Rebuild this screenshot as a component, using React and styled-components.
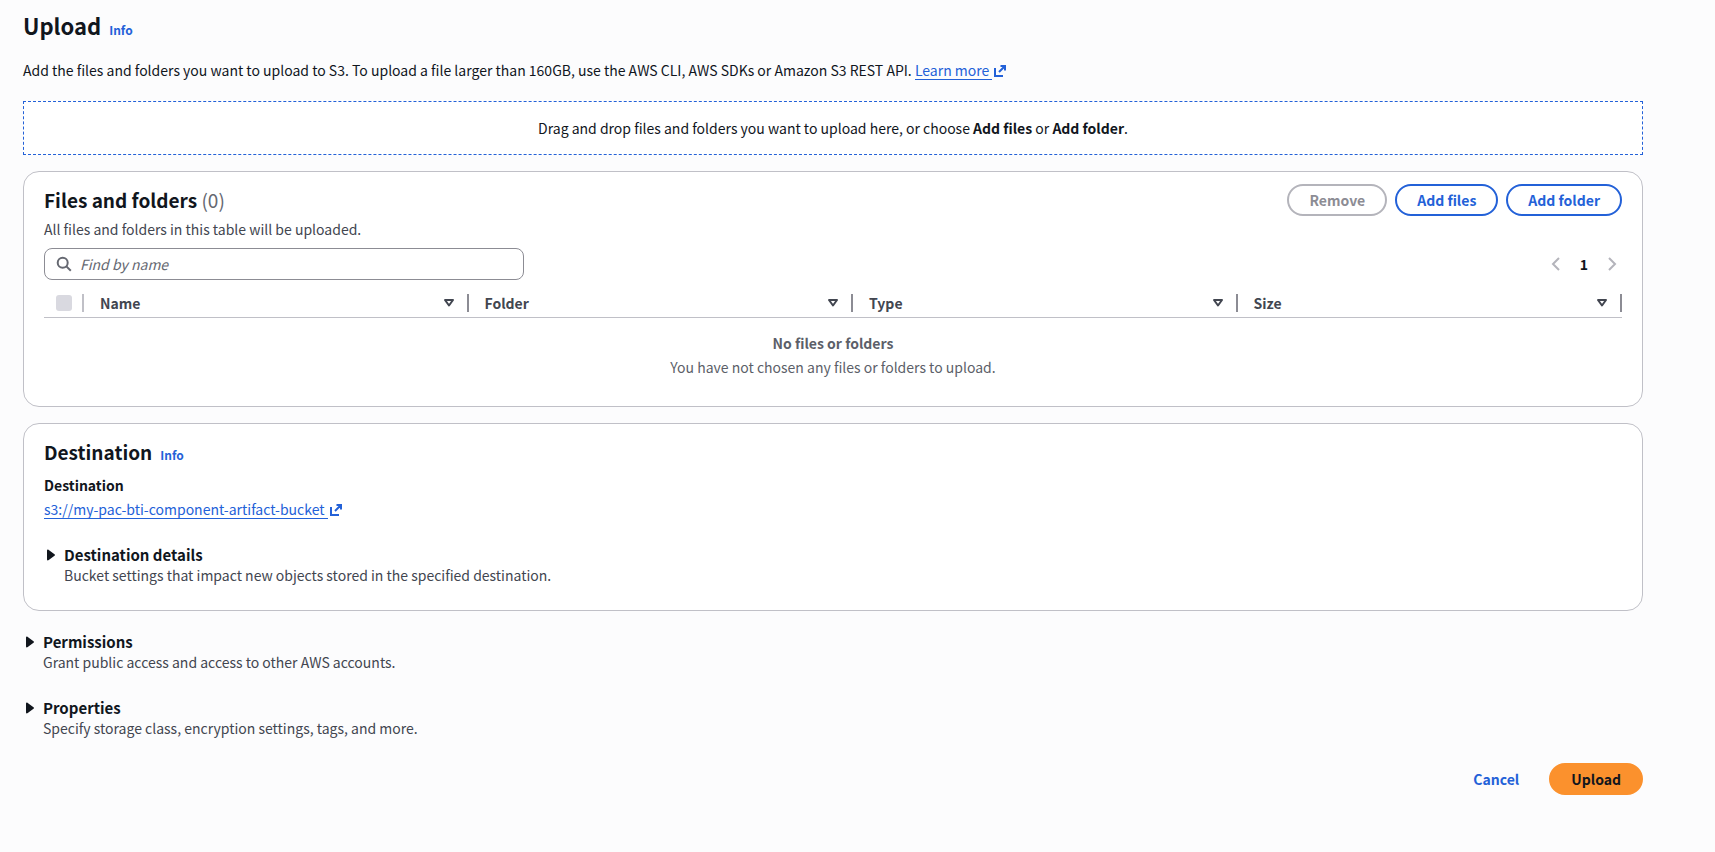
import styled, { createGlobalStyle } from 'styled-components';

const GlobalStyle = createGlobalStyle`
  * {
    box-sizing: border-box;
  }
  body {
    margin: 0;
    background: #fcfcfd;
    color: #11161d;
    font-family: 'Noto Sans CJK SC', 'Noto Sans', sans-serif;
    font-size: 14px;
    line-height: 20px;
  }
  button, input {
    font-family: inherit;
    font-size: inherit;
  }
`;

const Page = styled.main`
  padding: 10px 72px 24px 23px;
`;

const TitleRow = styled.div`
  display: flex;
  align-items: baseline;
  gap: 8px;
`;

const PageTitle = styled.h1`
  margin: 0;
  font-size: 22px;
  line-height: 30px;
`;

const InfoLink = styled.a`
  color: #2361d8;
  font-size: 12px;
  font-weight: 700;
  line-height: 16px;
  text-decoration: none;
`;

const Intro = styled.p`
  margin: 20px 0 21px;
`;

const ExternalLink = styled.a`
  display: inline-flex;
  align-items: center;
  gap: 1px;
  color: #2361d8;
  text-decoration: none;
`;

const LinkText = styled.span`
  padding-right: 3px;
  line-height: 18px;
  border-bottom: 1px solid #2361d8;
`;

const Stack = styled.div`
  display: flex;
  flex-direction: column;
  gap: 16px;
`;

const DropZone = styled.div`
  padding: 16px;
  border: 1px dashed #2361d8;
  background: #fff;
  text-align: center;
`;

const Card = styled.section`
  padding: 12px 20px ${props => props.$bottom || 0}px;
  border: 1px solid #c0c0c7;
  border-radius: 16px;
  background: #fff;
`;

const CardHeader = styled.div`
  display: flex;
  align-items: center;
  justify-content: space-between;
  min-height: 32px;
`;

const CardTitle = styled.h2`
  margin: 0;
  font-size: 19px;
  line-height: 24px;
`;

const Counter = styled.span`
  color: #656871;
  font-weight: 400;
`;

const Description = styled.p`
  margin: ${props => props.$top || 0}px 0 0;
  color: #424650;
`;

const Actions = styled.div`
  display: flex;
  justify-content: flex-end;
  gap: 8px;
`;

const Button = styled.button`
  height: 32px;
  padding: 0 20px;
  border: 2px solid #2361d8;
  border-radius: 16px;
  background: #fff;
  color: #2361d8;
  font-weight: 700;
  line-height: 20px;
  cursor: pointer;
  &:disabled {
    border-color: #b4b4bb;
    color: #8c8c94;
    cursor: default;
  }
`;

const LinkButton = styled(Button)`
  border-color: transparent;
  background: transparent;
`;

const PrimaryButton = styled(Button)`
  border-color: #fb912d;
  background: #fb912d;
  color: #11161d;
`;

const Tools = styled.div`
  display: flex;
  align-items: center;
  justify-content: space-between;
  margin-top: 9px;
`;

const SearchBox = styled.label`
  display: flex;
  align-items: center;
  gap: 8px;
  width: 480px;
  height: 32px;
  padding: 0 11px;
  border: 1px solid #8c8c94;
  border-radius: 8px;
`;

const SearchInput = styled.input`
  flex: 1;
  min-width: 0;
  padding: 0;
  border: none;
  outline: none;
  background: transparent;
  &::placeholder {
    color: #656871;
    font-style: italic;
    opacity: 1;
  }
`;

const Pagination = styled.nav`
  display: flex;
  align-items: center;
  gap: 12px;
  padding-right: 2px;
`;

const PageButton = styled.button`
  display: flex;
  justify-content: center;
  width: 16px;
  padding: 0;
  border: none;
  background: none;
  color: ${props => (props.$current ? '#11161d' : '#b4b4bb')};
  font-weight: 700;
  line-height: 20px;
`;

const Table = styled.table`
  width: 100%;
  margin-top: 8px;
  border-spacing: 0;
  table-layout: fixed;
`;

const HeadCell = styled.th`
  width: ${props => props.$width || 'auto'};
  padding: 6px 0 5px;
  border-bottom: 1px solid #c0c0c7;
  color: #424650;
  text-align: left;
`;

const HeadContent = styled.div`
  display: flex;
  align-items: center;
  height: 18px;
  padding-left: ${props => props.$indent}px;
  padding-right: 10px;
  border-right: 2px solid ${props => props.$divider};
`;

const HeadLabel = styled.span`
  flex: 1;
`;

const Checkbox = styled.input`
  appearance: none;
  width: 16px;
  height: 16px;
  margin: 0;
  border-radius: 3px;
  background: #d9d9e0;
`;

const EmptyCell = styled.td`
  padding: 15px 0 29px;
  color: #5c5f69;
  text-align: center;
`;

const EmptyText = styled.p`
  margin: 4px 0 0;
`;

const FieldLabel = styled.div`
  margin: 7px 0 4px;
  font-weight: 700;
`;

const Expandable = styled.div`
  padding-top: ${props => props.$top || 5}px;
  padding-bottom: ${props => props.$bottom || 0}px;
`;

const ExpandButton = styled.button`
  display: flex;
  align-items: center;
  padding: 0;
  border: none;
  background: none;
  color: #11161d;
  font-weight: 700;
  line-height: 20px;
  cursor: pointer;
`;

const ExpandTitle = styled.span`
  font-size: 15px;
`;

const ExpandText = styled(Description)`
  padding-left: 20px;
`;

const Footer = styled(Actions)`
  margin-top: 20px;
`;

function ExternalIcon() {
  return (
    <svg width="14" height="14" viewBox="0 0 14 14" fill="none" stroke="currentColor" strokeWidth="2" aria-hidden="true">
      <path d="M7.500 2H12v4.500M12 2 6 8M2 4v8h8" />
    </svg>
  );
}

function SearchIcon() {
  return (
    <svg width="16" height="16" viewBox="0 0 16 16" fill="none" stroke="#656871" strokeWidth="2" aria-hidden="true">
      <circle cx="6.7" cy="6.7" r="5" />
      <path d="m10.4 10.4 4.4 4.4" />
    </svg>
  );
}

function SortIcon() {
  return (
    <svg width="16" height="16" viewBox="0 0 16 16" fill="none" stroke="#424650" strokeWidth="2" strokeLinejoin="round" aria-hidden="true">
      <path d="M4 5h8l-4 5.500z" />
    </svg>
  );
}

function Chevron({ right }) {
  return (
    <svg width="16" height="16" viewBox="0 0 16 16" fill="none" stroke="currentColor" strokeWidth="2" aria-hidden="true">
      <path d={right ? 'm5 2 6 6-6 6' : 'm11 2-6 6 6 6'} />
    </svg>
  );
}

function Caret() {
  return (
    <svg width="20" height="16" viewBox="0 0 20 16" fill="currentColor" aria-hidden="true">
      <path d="M3 3.500c0-.8.700-1.200 1.400-.8l6.100 4.500c.6.4.6 1.200 0 1.600l-6.100 4.500c-.7.4-1.400 0-1.400-.8z" />
    </svg>
  );
}

function Section({ title, text, top, bottom }) {
  return (
    <Expandable $top={top} $bottom={bottom}>
      <ExpandButton type="button" aria-expanded="false">
        <Caret />
        <ExpandTitle>{title}</ExpandTitle>
      </ExpandButton>
      <ExpandText>{text}</ExpandText>
    </Expandable>
  );
}

const columns = ['Name', 'Folder', 'Type', 'Size'];

function App() {
  return (
    <Page>
      <GlobalStyle />
      <TitleRow>
        <PageTitle>Upload</PageTitle>
        <InfoLink href="#info">Info</InfoLink>
      </TitleRow>
      <Intro>
        Add the files and folders you want to upload to S3. To upload a file larger than 160GB, use the AWS CLI, AWS SDKs or Amazon S3 REST API.{' '}
        <ExternalLink href="#learn-more">
          <LinkText>Learn more</LinkText>
          <ExternalIcon />
        </ExternalLink>
      </Intro>

      <Stack>
        <DropZone>
          Drag and drop files and folders you want to upload here, or choose <b>Add files</b> or <b>Add folder</b>.
        </DropZone>

        <Card>
          <CardHeader>
            <CardTitle>
              Files and folders <Counter>(0)</Counter>
            </CardTitle>
            <Actions>
              <Button type="button" disabled>Remove</Button>
              <Button type="button">Add files</Button>
              <Button type="button">Add folder</Button>
            </Actions>
          </CardHeader>
          <Description $top={3}>All files and folders in this table will be uploaded.</Description>

          <Tools>
            <SearchBox>
              <SearchIcon />
              <SearchInput type="text" placeholder="Find by name" aria-label="Find by name" />
            </SearchBox>
            <Pagination>
              <PageButton type="button" aria-label="Previous page" disabled>
                <Chevron />
              </PageButton>
              <PageButton type="button" $current>1</PageButton>
              <PageButton type="button" aria-label="Next page" disabled>
                <Chevron right />
              </PageButton>
            </Pagination>
          </Tools>

          <Table>
            <thead>
              <tr>
                <HeadCell $width="40px">
                  <HeadContent $indent={12} $divider="#c0c0c7">
                    <Checkbox type="checkbox" aria-label="Select all" disabled />
                  </HeadContent>
                </HeadCell>
                {columns.map(column => (
                  <HeadCell key={column}>
                    <HeadContent $indent={16} $divider="#8c8c94">
                      <HeadLabel>{column}</HeadLabel>
                      <SortIcon />
                    </HeadContent>
                  </HeadCell>
                ))}
              </tr>
            </thead>
            <tbody>
              <tr>
                <EmptyCell colSpan={5}>
                  <b>No files or folders</b>
                  <EmptyText>You have not chosen any files or folders to upload.</EmptyText>
                </EmptyCell>
              </tr>
            </tbody>
          </Table>
        </Card>

        <Card $bottom={25}>
          <CardHeader>
            <TitleRow>
              <CardTitle>Destination</CardTitle>
              <InfoLink href="#destination-info">Info</InfoLink>
            </TitleRow>
          </CardHeader>
          <FieldLabel>Destination</FieldLabel>
          <ExternalLink href="#bucket">
            <LinkText>s3://my-pac-bti-component-artifact-bucket</LinkText>
            <ExternalIcon />
          </ExternalLink>
          <Section
            top={26}
            title="Destination details"
            text="Bucket settings that impact new objects stored in the specified destination."
          />
        </Card>

        <Section
          bottom={5}
          title="Permissions"
          text="Grant public access and access to other AWS accounts."
        />
        <Section
          bottom={5}
          title="Properties"
          text="Specify storage class, encryption settings, tags, and more."
        />
      </Stack>

      <Footer>
        <LinkButton type="button">Cancel</LinkButton>
        <PrimaryButton type="button">Upload</PrimaryButton>
      </Footer>
    </Page>
  );
}

export default App;
